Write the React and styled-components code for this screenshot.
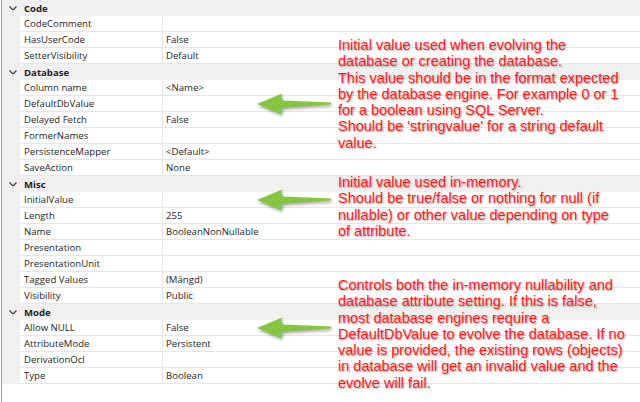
import React from "react";
import styled, { createGlobalStyle } from "styled-components";

const Global = createGlobalStyle`
  html, body { margin: 0; padding: 0; background: #fff; }
  body { width: 640px; height: 402px; overflow: hidden; }
`;

const Page = styled.div`
  position: relative;
  width: 640px;
  height: 402px;
  background: #fff;
  font-family: "Open Sans", "Noto Sans", sans-serif;
  font-size: 9.6px;
  color: #1e1e1e;
`;

const Grid = styled.div`
  display: flex;
  flex-direction: column;
  height: 402px;
  margin-left: 1px;
  border-left: 1px solid #a0a0a0;
  box-sizing: border-box;
`;

const Header = styled.div`
  display: grid;
  grid-template-columns: 19px 1fr;
  align-items: center;
  height: 16px;
  background: #f0f0f0;
  font-weight: 700;
  color: #1e1e1e;
`;

const Chevron = styled.svg`
  width: 8px;
  height: 5px;
  justify-self: center;
  margin-left: 2px;
`;

const HeaderLabel = styled.span`
  padding-left: 3px;
`;

const Row = styled.div`
  display: grid;
  grid-template-columns: 18px 143px 1fr;
  height: 16px;
`;

const Gutter = styled.div`
  background: #f0f0f0;
`;

const Cell = styled.div`
  display: flex;
  align-items: center;
  padding-left: ${(p) => (p.$value ? "3px" : "4px")};
  border-bottom: 1px solid #e6e6e6;
  border-right: ${(p) => (p.$value ? "none" : "1px solid #e6e6e6")};
  box-sizing: border-box;
  white-space: nowrap;
  overflow: hidden;
`;

const Note = styled.div`
  position: absolute;
  left: 338px;
  top: ${(p) => p.$top}px;
  width: 300px;
  font-family: "Liberation Sans", Arial, sans-serif;
  font-size: 14.5px;
  line-height: 16.3px;
  color: #ff1a1a;
  text-shadow: 1px 1px 2px rgba(0, 0, 0, 0.35);
  white-space: pre;
`;

const Arrow = styled.svg`
  position: absolute;
  left: 256px;
  top: ${(p) => p.$top}px;
  width: 76px;
  height: 24px;
  overflow: visible;
  filter: drop-shadow(1px 2px 1.5px rgba(0, 0, 0, 0.35));
`;

const groups = [
  {
    name: "Code",
    rows: [
      ["CodeComment", ""],
      ["HasUserCode", "False"],
      ["SetterVisibility", "Default"],
    ],
  },
  {
    name: "Database",
    rows: [
      ["Column name", "<Name>"],
      ["DefaultDbValue", ""],
      ["Delayed Fetch", "False"],
      ["FormerNames", ""],
      ["PersistenceMapper", "<Default>"],
      ["SaveAction", "None"],
    ],
  },
  {
    name: "Misc",
    rows: [
      ["InitialValue", ""],
      ["Length", "255"],
      ["Name", "BooleanNonNullable"],
      ["Presentation", ""],
      ["PresentationUnit", ""],
      ["Tagged Values", "(Mängd)"],
      ["Visibility", "Public"],
    ],
  },
  {
    name: "Mode",
    rows: [
      ["Allow NULL", "False"],
      ["AttributeMode", "Persistent"],
      ["DerivationOcl", ""],
      ["Type", "Boolean"],
    ],
  },
];

const notes = [
  {
    top: 37,
    text:
      "Initial value used when evolving the\ndatabase or creating the database.\nThis value should be in the format expected\nby the database engine. For example 0 or 1\nfor a boolean using SQL Server.\nShould be 'stringvalue' for a string default\nvalue.",
  },
  {
    top: 174,
    text:
      "Initial value used in-memory.\nShould be true/false or nothing for null (if\nnullable) or other value depending on type\nof attribute.",
  },
  {
    top: 277,
    text:
      "Controls both the in-memory nullability and\ndatabase attribute setting. If this is false,\nmost database engines require a\nDefaultDbValue to evolve the database. If no\nvalue is provided, the existing rows (objects)\nin database will get an invalid value and the\nevolve will fail.",
  },
];

const arrowTops = [92, 188, 316];

function GreenArrow({ top }) {
  return (
    <Arrow $top={top} viewBox="0 0 76 24">
      <path
        d="M1 12 L26 1.5 Q24.5 6 27 8.5 L75 10.6 L75 12.6 L27 15.5 Q24.5 18 26 22.5 Z"
        fill="#86c540"
      />
    </Arrow>
  );
}

export default function App() {
  return (
    <Page>
      <Global />
      <Grid>
        {groups.map((g) => (
          <React.Fragment key={g.name}>
            <Header>
              <Chevron viewBox="0 0 8 5">
                <path d="M0.5 0.5 L4 4 L7.5 0.5" fill="none" stroke="#404040" strokeWidth="1.2" />
              </Chevron>
              <HeaderLabel>{g.name}</HeaderLabel>
            </Header>
            {g.rows.map(([k, v]) => (
              <Row key={k}>
                <Gutter />
                <Cell>{k}</Cell>
                <Cell $value>{v}</Cell>
              </Row>
            ))}
          </React.Fragment>
        ))}
      </Grid>
      {arrowTops.map((t) => (
        <GreenArrow key={t} top={t} />
      ))}
      {notes.map((n) => (
        <Note key={n.top} $top={n.top}>
          {n.text}
        </Note>
      ))}
    </Page>
  );
}
